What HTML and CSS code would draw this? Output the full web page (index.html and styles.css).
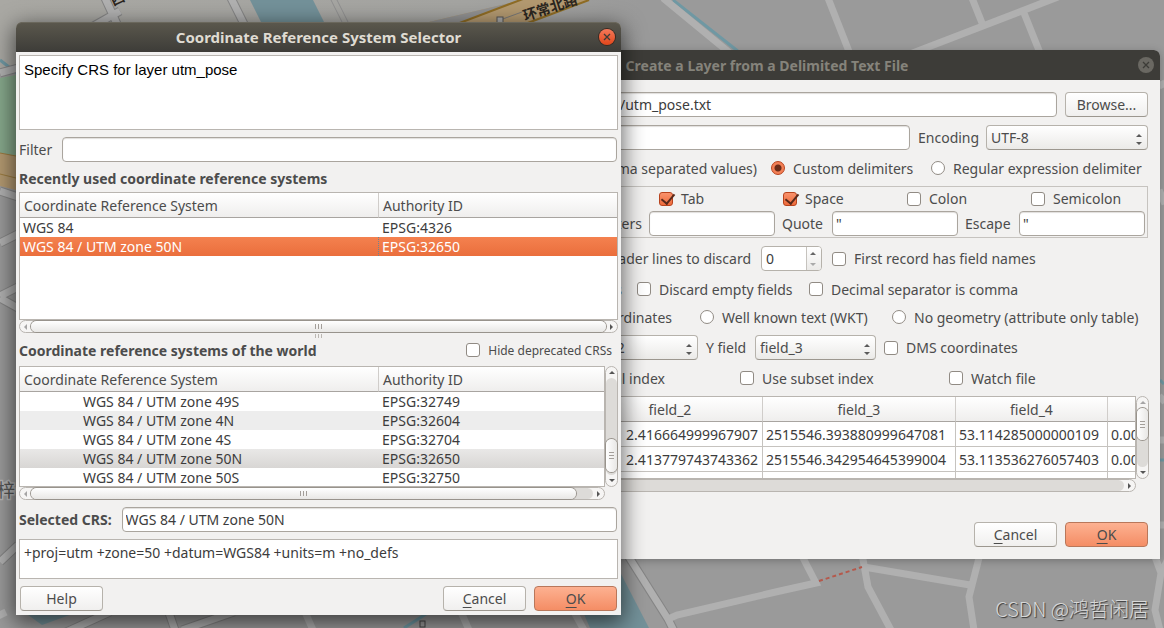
FILE: index.html
```html
<!DOCTYPE html>
<html lang="en">
	<head>
		<meta charset="utf-8">
		<title>Coordinate Reference System Selector</title>
		<link rel="stylesheet" href="styles.css">
	</head>
	<body>
		<div class="desktop">
			<svg class="map" viewBox="0 0 1164 628" preserveAspectRatio="xMidYMid slice" aria-hidden="true">
				<defs>
					<linearGradient id="land">
						<stop offset="0" stop-color="#a9a8a3"/>
						<stop offset="0.4" stop-color="#a4a4a1"/>
						<stop offset="0.55" stop-color="#9a9a9a"/>
					</linearGradient>
				</defs>
				<rect width="1164" height="628" fill="#9a9a9a"/>
				<rect width="1164" height="70" fill="url(#land)"/>
				<!-- water and parks -->
				<g fill="#739199">
					<path d="M250 0h63l12 24h-63z"/>
					<path d="M583 612l38-38 28 54h-59z"/>
					<path d="M24 612h54l-36 13z"/>
				</g>
				<path d="M0 78l16-3v81l-16-3z" fill="#86a88b"/>
				<path d="M0 153l16 3v34l-16-4z" fill="#b39970"/>
				<path d="M0 153l16 3M0 174l16 4" stroke="#9a7a3e" fill="none"/>
				<g fill="none" stroke="#6f98a3" stroke-width="3">
					<path d="M673 0l66 52M0 60l18 14M1160 380l4 4M1160 460h4"/>
					<path d="M70 628q20-4 34-14M404 628l22-14"/>
				</g>
				<!-- streets: dark casing first, light fill on top -->
				<g fill="none" stroke="#858585" stroke-width="9">
					<path d="M231 -2l14 28M105 -2l12 26M90 28l30-17"/>
					<path d="M0 73l18-5M0 191l18 6M0 243l18-9M0 296l18-9M0 298l18 10M0 562l18-17"/>
					<path d="M627 554l41 65 6 12M66 632l44-20M168 610l7 20M182 630l52-18"/>
				</g>
				<g fill="none" stroke="#b0b0b0" stroke-width="7">
					<path d="M231 -2l14 28M105 -2l12 26M90 28l30-17"/>
					<path d="M0 73l18-5M0 191l18 6M0 243l18-9M0 296l18-9M0 298l18 10M0 562l18-17M-2 616l8-4"/>
					<path d="M663 -2l68 56M627 554l41 65 6 12M66 632l44-20M168 610l7 20M182 630l52-18"/>
					<path d="M305 612l8 18M461 612l8 18M574 612l10 18"/>
					<path d="M828 -2l22 56M910 54l148-57M972 -2l10 25M1024 13l16 40"/>
					<path d="M666 620l11-5 103-24 36-8-15-29M862 554l6 33 23 43M864 567l106 18M980 554l-11 43 5 33"/>
					<path d="M1154 554l7 19-6 37 5 20M1161 573l8-16M1159 86l6-3M1159 190l6 14M1159 396l6 6M1159 440h6M1159 525h6"/>
				</g>
				<path d="M330 -2l14 28M336 -2l14 28" stroke="#8f8f8f" fill="none"/>
				<path d="M819 581l43-14" stroke="#b5594c" stroke-width="2" stroke-dasharray="4 3" fill="none"/>
				<path d="M429 22l94-22h64l-62 24h-68z" fill="#b39970"/>
				<path d="M429 22l94-22-66 24z" fill="#929292"/>
				<path d="M457 24l66-25M525 24l64-24" stroke="#8f6c24" stroke-width="2" fill="none"/>
				<path d="M500 20l22-8" stroke="#777"/>
				<rect x="497" y="17" width="6" height="6" fill="#aaa" stroke="#555"/>
				<rect x="420" y="621" width="5" height="6" fill="#999" stroke="#444"/>
				<text class="street" x="525" y="21" transform="rotate(-18 525 21)">环常北路</text>
				<text class="street" x="113" y="6" transform="rotate(-24 113 6)">西</text>
				<text class="town" x="-3" y="497">梓</text>
			</svg>

			<!-- delimited text dialog, behind -->
			<section class="window layer-window">
				<header class="titlebar">
					<h1>Create a Layer from a Delimited Text File</h1>
					<button class="close" type="button" aria-label="Close"><svg viewBox="0 0 16 16"><path d="M5 5l6 6M11 5l-6 6"/></svg></button>
				</header>
				<form class="layer-body">
					<div class="row file-row">
						<label for="file">File name</label>
						<input class="field" id="file" type="text" value="/utm_pose.txt">
						<button class="btn" type="button">Browse...</button>
					</div>
					<div class="row name-row">
						<label for="layer">Layer name</label>
						<input class="field" id="layer" type="text">
						<label for="enc">Encoding</label>
						<span class="combo"><select id="enc"><option>UTF-8</option></select></span>
					</div>
					<div class="row format-row">
						<label class="opt"><input type="radio" name="format">CSV (comma separated values)</label>
						<label class="opt"><input type="radio" name="format" checked>Custom delimiters</label>
						<label class="opt"><input type="radio" name="format">Regular expression delimiter</label>
					</div>
					<fieldset class="delims">
						<div class="delim-checks">
							<label class="opt"><input type="checkbox" checked>Tab</label>
							<label class="opt"><input type="checkbox" checked>Space</label>
							<label class="opt"><input type="checkbox">Colon</label>
							<label class="opt"><input type="checkbox">Semicolon</label>
						</div>
						<div class="delim-fields">
							<label for="other">Other delimiters</label>
							<input class="field" id="other" type="text">
							<label for="quote">Quote</label>
							<input class="field" id="quote" type="text" value="&quot;">
							<label for="escape">Escape</label>
							<input class="field" id="escape" type="text" value="&quot;">
						</div>
					</fieldset>
					<div class="row skip-row">
						<label for="skip">Number of header lines to discard</label>
						<span class="spin"><input id="skip" type="text" value="0"><i></i></span>
						<label class="opt"><input type="checkbox">First record has field names</label>
					</div>
					<div class="row trim-row">
						<label class="opt"><input type="checkbox">Trim fields</label>
						<label class="opt"><input type="checkbox">Discard empty fields</label>
						<label class="opt"><input type="checkbox">Decimal separator is comma</label>
					</div>
					<div class="row geom-row">
						<label class="opt"><input type="radio" name="geom">Point coordinates</label>
						<label class="opt"><input type="radio" name="geom">Well known text (WKT)</label>
						<label class="opt"><input type="radio" name="geom">No geometry (attribute only table)</label>
					</div>
					<div class="row xy-row">
						<label for="xf">X field</label>
						<span class="combo"><select id="xf"><option>field_2</option></select></span>
						<label for="yf">Y field</label>
						<span class="combo"><select id="yf"><option>field_3</option></select></span>
						<label class="opt"><input type="checkbox">DMS coordinates</label>
					</div>
					<div class="row index-row">
						<label class="opt"><input type="checkbox">Use spatial index</label>
						<label class="opt"><input type="checkbox">Use subset index</label>
						<label class="opt"><input type="checkbox">Watch file</label>
					</div>
					<div class="scroll-area sample">
						<div class="view">
							<table>
								<colgroup><col><col class="c2"><col class="c3"><col class="c4"><col class="c5"></colgroup>
								<thead><tr><th></th><th>field_2</th><th>field_3</th><th>field_4</th><th></th></tr></thead>
								<tbody>
									<tr><td></td><td>2.416664999967907</td><td>2515546.393880999647081</td><td>53.114285000000109</td><td>0.00</td></tr>
									<tr><td></td><td>2.413779743743362</td><td>2515546.342954645399004</td><td>53.113536276057403</td><td>0.00</td></tr>
									<tr><td></td><td></td><td></td><td></td><td></td></tr>
								</tbody>
							</table>
						</div>
						<div class="bar vbar"><i class="up off"></i><span class="track"><b></b></span><i class="down"></i></div>
						<div class="bar hbar"><i class="left off"></i><span class="track"><b></b></span><i class="right"></i></div>
					</div>
					<footer class="actions">
						<button class="btn" type="button"><u>C</u>ancel</button>
						<button class="btn primary" type="button"><u>O</u>K</button>
					</footer>
				</form>
			</section>

			<!-- CRS selector, in front -->
			<section class="window crs-window">
				<header class="titlebar">
					<h1>Coordinate Reference System Selector</h1>
					<button class="close" type="button" aria-label="Close"><svg viewBox="0 0 16 16"><path d="M5 5l6 6M11 5l-6 6"/></svg></button>
				</header>
				<form class="crs-body">
					<div class="note">Specify CRS for layer utm_pose</div>
					<div class="line">
						<label for="filter">Filter</label>
						<input class="field" id="filter" type="text">
					</div>
					<h2>Recently used coordinate reference systems</h2>
					<div class="scroll-area recent">
						<div class="view">
							<table>
								<colgroup><col class="name"><col></colgroup>
								<thead><tr><th>Coordinate Reference System</th><th>Authority ID</th></tr></thead>
								<tbody>
									<tr><td>WGS 84</td><td>EPSG:4326</td></tr>
									<tr class="selected"><td>WGS 84 / UTM zone 50N</td><td>EPSG:32650</td></tr>
								</tbody>
							</table>
						</div>
						<div class="bar hbar"><i class="left off"></i><span class="track"><b></b></span><i class="right"></i></div>
					</div>
					<div class="splitter"></div>
					<div class="world-head">
						<h2>Coordinate reference systems of the world</h2>
						<label class="opt small"><input type="checkbox">Hide deprecated CRSs</label>
					</div>
					<div class="scroll-area world">
						<div class="view">
							<table>
								<colgroup><col class="name"><col></colgroup>
								<thead><tr><th>Coordinate Reference System</th><th>Authority ID</th></tr></thead>
								<tbody>
									<tr><td>WGS 84 / UTM zone 49S</td><td>EPSG:32749</td></tr>
									<tr class="alt"><td>WGS 84 / UTM zone 4N</td><td>EPSG:32604</td></tr>
									<tr><td>WGS 84 / UTM zone 4S</td><td>EPSG:32704</td></tr>
									<tr class="current"><td>WGS 84 / UTM zone 50N</td><td>EPSG:32650</td></tr>
									<tr><td>WGS 84 / UTM zone 50S</td><td>EPSG:32750</td></tr>
								</tbody>
							</table>
						</div>
						<div class="bar vbar"><i class="up"></i><span class="track"><b></b></span><i class="down"></i></div>
						<div class="bar hbar"><i class="left off"></i><span class="track"><b></b></span><i class="right"></i></div>
					</div>
					<div class="line picked">
						<label for="picked">Selected CRS:</label>
						<input class="field" id="picked" type="text" value="WGS 84 / UTM zone 50N">
					</div>
					<div class="proj">+proj=utm +zone=50 +datum=WGS84 +units=m +no_defs</div>
					<footer class="actions">
						<button class="btn help" type="button">Help</button>
						<button class="btn" type="button"><u>C</u>ancel</button>
						<button class="btn primary" type="button"><u>O</u>K</button>
					</footer>
				</form>
			</section>

			<p class="watermark">CSDN @鸿哲闲居</p>
		</div>
	</body>
</html>
```
FILE: styles.css
```css
*{margin: 0;padding: 0;box-sizing: border-box;}
body{
	font: 14px/19px "Noto Sans", "Noto Sans CJK SC", sans-serif;
	color: #4c4c4c;
}
input,select,button{
	font: inherit;
	color: inherit;
}
.desktop{
	position: relative;
	min-height: 100vh;
	overflow: hidden;
	background: #9a9a9a;
}
.map{
	position: absolute;
	width: 100%;
	height: 100%;
}
.street{
	font: bold 14px "Noto Sans CJK SC", sans-serif;
	fill: #2b2620;
}
.town{
	font: 18px "Noto Sans CJK SC", sans-serif;
	fill: #555;
	stroke: #b5b5b5;
	stroke-width: 3px;
	paint-order: stroke;
}

/* windows */
.window{
	position: absolute;
	background: #f2f1f0;
	border-radius: 6px 6px 0 0;
}
.layer-window{
	top: 50px;
	left: 374px;
	right: 4px;
	box-shadow: 0 2px 8px rgba(0,0,0,0.25);
}
.crs-window{
	top: 22px;
	left: 16px;
	right: 543px;
	box-shadow: 0 6px 22px 2px rgba(0,0,0,0.6);
}
.titlebar{
	display: flex;
	align-items: center;
	height: 30px;
	padding: 0 6px;
	border-radius: 6px 6px 0 0;
	background: #3d3c38;
	color: #85837b;
}
.titlebar h1{
	flex: 1;
	padding-left: 16px;
	font-size: 14px;
	text-align: center;
	white-space: nowrap;
}
.crs-window .titlebar{
	background: linear-gradient(#5b584d, #3d3c38);
	box-shadow: inset 0 1px #6a675c;
	color: #dfdbd2;
}
.crs-window .titlebar h1{font-size: 15px;}
.close{
	width: 16px;
	height: 16px;
	border: 0;
	border-radius: 50%;
	background: #6a6862;
}
.close svg{
	display: block;
	fill: none;
	stroke: #3d3c38;
	stroke-width: 1.3;
}
.crs-window .close{
	background: linear-gradient(#f4795a, #e2461a);
	box-shadow: 0 0 0 1px #3a2a22;
}

/* controls */
.field{
	min-width: 0;
	height: 25px;
	padding: 0 3px;
	border: 1px solid #aaa59e;
	border-radius: 4px;
	background: #fff;
	box-shadow: inset 0 1px 1px #e0dedc;
	color: #3c3c3c;
}
.btn{
	width: 83px;
	height: 25px;
	border: 1px solid #b6b2ab;
	border-bottom-color: #9c978f;
	border-radius: 4px;
	background: linear-gradient(#fff, #f0efee);
}
.btn u{text-underline-offset: 3px;}
.primary{
	border-color: #b9775a;
	background: linear-gradient(#fdb191, #f48d65);
}
.combo{
	position: relative;
	display: block;
}
.combo select{
	display: block;
	width: 100%;
	height: 25px;
	padding: 0 4px;
	appearance: none;
	border: 1px solid #b6b2ab;
	border-bottom-color: #9c978f;
	border-radius: 4px;
	background: linear-gradient(#fff, #ebeae8);
}
.combo::before,.combo::after,.spin i::before,.spin i::after{
	content: "";
	position: absolute;
	right: 6px;
	border: 3px solid transparent;
}
.combo::before{
	top: 6px;
	border-bottom-color: #5a5a5a;
}
.combo::after{
	bottom: 2px;
	border-top-color: #5a5a5a;
}
.spin{
	display: flex;
	height: 25px;
	border: 1px solid #b6b2ab;
	border-radius: 4px;
	background: #fff;
	overflow: hidden;
}
.spin input{
	width: 44px;
	padding: 0 4px;
	border: 0;
	background: none;
	color: #3c3c3c;
}
.spin i{
	position: relative;
	flex: 1;
	border-left: 1px solid #c6c3be;
	background: linear-gradient(#fff, #ebeae8);
}
.spin i::before{
	top: 2px;
	right: 5px;
	border-bottom-color: #666;
}
.spin i::after{
	bottom: 1px;
	right: 5px;
	border-top-color: #aaa;
}
.opt{
	display: flex;
	align-items: center;
	gap: 8px;
	white-space: nowrap;
}
.opt input{
	position: relative;
	flex: none;
	width: 14px;
	height: 14px;
	appearance: none;
	border: 1px solid #918b84;
	border-radius: 3px;
	background: #fff;
}
.opt input[type=radio]{border-radius: 50%;}
.opt input:checked{
	border-color: #b8431d;
	background: linear-gradient(#f9926c, #ee6b3b);
}
.opt input[type=radio]:checked{
	background: radial-gradient(circle, #6b2c18 3px, #f37f55 4px);
}
.opt input[type=checkbox]:checked::after{
	content: "";
	position: absolute;
	left: 4px;
	top: -2px;
	width: 6px;
	height: 11px;
	border: solid #59291a;
	border-width: 0 2px 2px 0;
	transform: rotate(40deg);
}
.small{font-size: 12px;}

/* scroll areas */
.scroll-area{
	display: grid;
	grid-template-columns: minmax(0, 1fr) auto;
}
.view{
	overflow: hidden;
	border: 1px solid #b9b5b0;
	background: #fff;
	color: #3c3c3c;
}
.view table{
	width: 100%;
	table-layout: fixed;
	border-collapse: separate;
	border-spacing: 0;
}
.view th{
	height: 25px;
	border-bottom: 1px solid #a8a4a0;
	border-right: 1px solid #d0cdca;
	background: linear-gradient(#fff, #efeeed);
	color: #4c4c4c;
	font-weight: normal;
}
.view th:last-child{border-right: 0;}
.view td{
	white-space: nowrap;
}
.bar{
	display: flex;
	border: 1px solid #b9b5b0;
	border-radius: 7px;
	background: #f6f5f4;
}
.hbar{
	grid-column: 1;
	height: 13px;
}
.vbar{
	width: 13px;
	flex-direction: column;
}
.bar i{
	display: flex;
	flex: none;
	align-items: center;
	justify-content: center;
	width: 11px;
	height: 11px;
}
.bar i::before{
	content: "";
	border: 3px solid transparent;
}
.bar .up::before{border-bottom-color: #555;border-top: 0;}
.bar .down::before{border-top-color: #555;border-bottom: 0;}
.bar .left::before{border-right-color: #555;border-left: 0;}
.bar .right::before{border-left-color: #555;border-right: 0;}
.bar .off{opacity: 0.5;}
.track{
	display: flex;
	flex: 1;
	border-radius: 7px;
	background: #dddbd8;
}
.track b{
	display: flex;
	align-items: center;
	justify-content: center;
	border-radius: 7px;
	background: linear-gradient(#fff, #e8e7e5);
	box-shadow: 0 0 0 1px #98938c;
}
.track b::before{
	content: "";
	width: 7px;
	height: 5px;
	background: repeating-linear-gradient(90deg, #a39e99 0 1px, transparent 1px 3px);
}
.vbar .track{flex-direction: column;}
.vbar .track b{background: linear-gradient(90deg, #fff, #e8e7e5);}
.vbar .track b::before{
	width: 5px;
	height: 7px;
	background: repeating-linear-gradient(#a39e99 0 1px, transparent 1px 3px);
}

/* delimited text dialog */
.layer-body{
	display: flex;
	flex-direction: column;
	gap: 8px;
	padding: 12px;
}
.row{
	display: grid;
	gap: 8px;
	align-items: center;
	min-height: 20px;
	white-space: nowrap;
}
.file-row{grid-template-columns: 222px 1fr 83px;}
.name-row{grid-template-columns: 222px 1fr 60px 162px;}
.format-row{
	grid-template-columns: 1fr 160px 217px;
	column-gap: 0;
}
.format-row .opt:first-child{padding-right: 14px;}
.row .opt:first-child,.skip-row > :first-child,.xy-row > :first-child{justify-self: end;}
.delims{
	display: grid;
	gap: 4px;
	min-width: 0;
	padding: 4px 2px 1px;
	border: 1px solid #c6c3bf;
}
.delim-checks{
	display: grid;
	grid-template-columns: repeat(3, 124px) 114px;
	justify-content: end;
	align-items: center;
	height: 16px;
	line-height: 16px;
}
.delim-fields{
	display: grid;
	grid-template-columns: 1fr 126px 43px 126px 47px 126px;
	gap: 7px;
	align-items: center;
}
.delim-fields label:first-child{justify-self: end;}
.skip-row{
	grid-template-columns: 1fr 61px 316px;
	column-gap: 10px;
}
.trim-row{
	grid-template-columns: 1fr 172px 339px;
	column-gap: 0;
}
.trim-row .opt:first-child{padding-right: 15px;}
.geom-row{
	grid-template-columns: 1fr 192px 256px;
	column-gap: 0;
}
.geom-row .opt:first-child{padding-right: 28px;}
.xy-row{grid-template-columns: 1fr 121px 41px 121px 264px;}
.index-row{
	grid-template-columns: 1fr 209px 199px;
	column-gap: 0;
}
.index-row .opt:first-child{padding-right: 75px;}
.sample{margin-right: -1px;}
.sample .view{height: 83px;}
.sample .c2{width: 185px;}
.sample .c3{width: 193px;}
.sample .c4{width: 152px;}
.sample .c5{width: 27px;}
.sample td{
	height: 25px;
	padding: 0 4px 0 3px;
	border-right: 1px solid #c6c3bf;
	border-bottom: 1px solid #c6c3bf;
}
.sample td:nth-child(2){text-align: right;}
.sample td:last-child{
	border-right: 0;
	overflow: hidden;
	padding-right: 0;
}
.sample .vbar b{height: 32px;}
.sample .hbar b{width: 200px;}
.layer-body .actions{margin-top: 22px;}
.actions{
	display: flex;
	justify-content: flex-end;
	gap: 8px;
}

/* CRS selector */
.crs-body{padding: 3px 3px 4px;}
.note{
	height: 75px;
	padding: 4px;
	border: 1px solid #b9b5b0;
	background: #fff;
	color: #000;
	font: 15px/19px "Liberation Sans", sans-serif;
}
.line{
	display: flex;
	align-items: center;
	gap: 10px;
	margin: 7px 1px 7px 0;
}
.line .field{flex: 1;}
.crs-body h2{
	font-size: 14px;
	line-height: 19px;
}
.crs-body > h2{margin-bottom: 4px;}
.name{width: 359px;}
.recent .view{height: 128px;}
.crs-window th{
	padding-left: 4px;
	text-align: left;
}
.crs-window td{
	height: 19px;
	padding-left: 3px;
}
.crs-window .selected td{
	background: linear-gradient(#f4814f, #ea6e3c);
	color: #fff;
}
.selected td:first-child{
	border-right: 1px dotted #6e8591;
}
.alt{background: #ededed;}
.current{background: linear-gradient(#e9e8e7, #d8d6d4);}
.recent .hbar b{width: 100%;}
.splitter{
	width: 7px;
	height: 4px;
	margin: 1px auto 0;
	background: repeating-linear-gradient(90deg, #bbb7b2 0 1px, transparent 1px 3px);
}
.world-head{
	display: flex;
	align-items: center;
	justify-content: space-between;
	height: 24px;
	margin: 0 6px 4px 0;
}
.world .view{height: 121px;}
.world td:first-child{padding-left: 63px;}
.world .vbar .track{justify-content: flex-end;}
.world .vbar b{
	height: 33px;
	margin-bottom: 3px;
}
.world .hbar b{width: 97%;}
.picked label{font-weight: bold;}
.proj{
	height: 40px;
	margin-bottom: 7px;
	padding: 3px 4px;
	border: 1px solid #b9b5b0;
	background: #fff;
	color: #3c3c3c;
}
.crs-body .actions{padding: 0 1px;}
.help{margin-right: auto;}

.watermark{
	position: absolute;
	right: 15px;
	bottom: 5px;
	color: #d8d8d8;
	font: 300 20px/28px "Noto Sans CJK SC", sans-serif;
	text-shadow: 1px 1px 1px #333;
}
```
